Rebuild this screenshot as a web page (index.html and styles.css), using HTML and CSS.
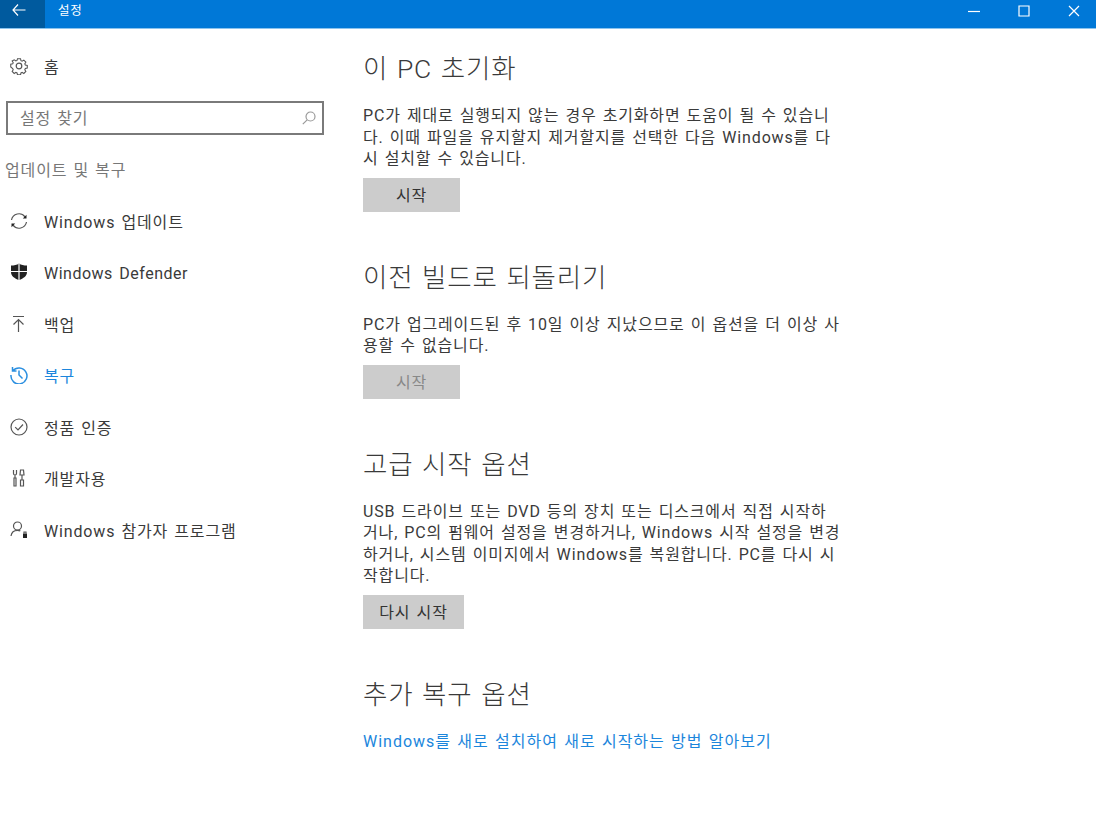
FILE: index.html
```html
<!DOCTYPE html>
<html lang="ko">
<head>
    <meta charset="UTF-8">
    <title>설정</title>
    <link rel="stylesheet" href="styles.css">
</head>
<body>
    <header class="titlebar">
        <div class="back-btn">
            <svg width="14" height="12" viewBox="0 0 14 12"><path d="M6 .5 1 6l5 5.500M1 6H13.500" class="ico-white"/></svg>
        </div>
        <span class="app-title">설정</span>
        <div class="win-btns">
            <svg width="12" height="12" viewBox="0 0 12 12"><path d="M0 6.500H12" class="ico-white"/></svg>
            <svg width="12" height="12" viewBox="0 0 12 12"><path d="M1 1H11V11H1Z" class="ico-white"/></svg>
            <svg width="12" height="12" viewBox="0 0 12 12"><path d="M1 1 11 11M11 1 1 11" class="ico-white"/></svg>
        </div>
    </header>

    <div class="main">
        <nav class="sidebar">
            <a class="nav-item home">
                <svg class="nav-icon" viewBox="0 0 18 18">
                    <path class="ico" d="M7.300 1h3.400l.5 2.200 1.300.6 1.900-1.200 2.300 2.300-1.200 1.900.6 1.300 2.200.5v3l-2.200.5-.6 1.300 1.200 1.900-2.300 2.300-1.900-1.200-1.300.6-.5 2.200H7.300l-.5-2.200-1.300-.6-1.900 1.200-2.300-2.300 1.200-1.900-.6-1.300L-.3 10.300v-3l2.200-.5.6-1.300-1.200-1.900L3.600 2.300l1.900 1.200 1.300-.6Z" transform="translate(1 .8) scale(.89)"/>
                    <circle class="ico" cx="9" cy="9" r="2.800"/>
                </svg>
                <span>홈</span>
            </a>
            <div class="search-box">
                <span class="search-text">설정 찾기</span>
                <svg width="14" height="14" viewBox="0 0 14 14"><circle class="ico-gray" cx="8.500" cy="5.500" r="4.500"/><path class="ico-gray" d="M5.200 8.800.8 13.200"/></svg>
            </div>
            <div class="nav-section">업데이트 및 복구</div>
            <a class="nav-item">
                <svg class="nav-icon" viewBox="0 0 18 18"><path class="ico" d="M1.500 8A7.600 7.600 0 0 1 15 4.800M16.500 10A7.600 7.600 0 0 1 3 13.200"/><path class="fill-dark" d="M12.800 6.500h3.700V2.800ZM5.200 11.500H1.500v3.700Z"/></svg>
                <span>Windows 업데이트</span>
            </a>
            <a class="nav-item tight">
                <svg class="nav-icon" viewBox="0 0 18 18"><path class="fill-dark" d="M9 .5c2 1.400 4.900 2 8 2v6.500c0 4-3.500 6.500-8 8-4.500-1.500-8-4-8-8V2.500C4.100 2.500 7 1.900 9 .5Z"/><path class="ico-white" d="M9 .5v16.500M1 8.500h16"/></svg>
                <span>Windows Defender</span>
            </a>
            <a class="nav-item">
                <svg class="nav-icon" viewBox="0 0 18 18"><path class="ico" d="M3 1.500H14M8.500 17V5M3.500 9.500l5-5 5 5"/></svg>
                <span>백업</span>
            </a>
            <a class="nav-item active">
                <svg class="nav-icon" viewBox="0 0 18 18"><path class="ico-blue" d="M2.800 4.800A8 8 0 1 1 1 9M2.500 1v4h4M9 4.500V9l3.500 3.500"/></svg>
                <span>복구</span>
            </a>
            <a class="nav-item">
                <svg class="nav-icon" viewBox="0 0 18 18"><circle class="ico" cx="9" cy="9" r="8"/><path class="ico" d="M5.200 9.200 8 12l5-5.500"/></svg>
                <span>정품 인증</span>
            </a>
            <a class="nav-item">
                <svg class="nav-icon" viewBox="0 0 18 18"><path class="ico" d="M3.500 1v3.500c0 1 .6 1.500 1.500 1.500s1.500-.5 1.500-1.500V1M5 6v3M4 9h2v8H4ZM10.500 1h3l.5 5h-4ZM12 6v5M10.500 11h3v6h-3Z"/></svg>
                <span>개발자용</span>
            </a>
            <a class="nav-item">
                <svg class="nav-icon" viewBox="0 0 18 18"><circle class="ico" cx="7.500" cy="5" r="4"/><path class="ico" d="M1 15C1.500 11.500 4 9.300 7.500 9.300c1 0 2 .2 2.800.6"/><path class="fill-dark" d="M13 12.500h4V17h-4Z"/><path class="ico" d="M14 12.500V11h2v1.500"/></svg>
                <span>Windows 참가자 프로그램</span>
            </a>
        </nav>

        <main class="content">
            <section class="block">
                <h2>이 PC 초기화</h2>
                <p>PC가 제대로 실행되지 않는 경우 초기화하면 도움이 될 수 있습니<br>다. 이때 파일을 유지할지 제거할지를 선택한 다음 Windows를 다<br>시 설치할 수 있습니다.</p>
                <button class="btn">시작</button>
            </section>
            <section class="block">
                <h2>이전 빌드로 되돌리기</h2>
                <p>PC가 업그레이드된 후 10일 이상 지났으므로 이 옵션을 더 이상 사<br>용할 수 없습니다.</p>
                <button class="btn disabled">시작</button>
            </section>
            <section class="block">
                <h2>고급 시작 옵션</h2>
                <p>USB 드라이브 또는 DVD 등의 장치 또는 디스크에서 직접 시작하<br>거나, PC의 펌웨어 설정을 변경하거나, Windows 시작 설정을 변경<br>하거나, 시스템 이미지에서 Windows를 복원합니다. PC를 다시 시<br>작합니다.</p>
                <button class="btn wide">다시 시작</button>
            </section>
            <section class="block">
                <h2 class="link-head">추가 복구 옵션</h2>
                <a class="link">Windows를 새로 설치하여 새로 시작하는 방법 알아보기</a>
            </section>
        </main>
    </div>
</body>
</html>
```

FILE: styles.css
```css
body {
    margin: 0;
    height: 826px;
    overflow: hidden;
    background: #fff;
    color: #3a3a3a;
    font-family: Roboto, "Noto Sans CJK KR", sans-serif;
    font-size: 16px;
    letter-spacing: 0.85px;
    word-spacing: 1.3px;
}
svg {
    display: block;
    flex: none;
}
.ico, .ico-white, .ico-gray, .ico-blue {
    fill: none;
    stroke-width: 1.2;
}
.ico { stroke: #555; }
.ico-white { stroke: #fff; }
.ico-gray { stroke: #999; }
.ico-blue { stroke: #2b8fe0; stroke-width: 1.5; }
.fill-dark { fill: #222; }

.titlebar {
    display: flex;
    align-items: flex-start;
    height: 28px;
    background: #0078d7;
    border-bottom: 1px solid #8cc4ee;
    color: #fff;
}
.back-btn {
    width: 45px;
    height: 100%;
    padding: 4px 0 0 12px;
    box-sizing: border-box;
    background: #005a9e;
}
.app-title {
    margin-left: 13px;
    font-size: 12.500px;
    line-height: 22px;
}
.win-btns {
    display: flex;
    gap: 38px;
    margin-left: auto;
    margin-right: 16px;
    padding-top: 5px;
}

.main {
    display: flex;
}
.sidebar {
    width: 363px;
    flex: none;
    box-sizing: border-box;
    padding: 12px 0 0 6px;
}
.nav-item {
    display: flex;
    align-items: center;
    gap: 16px;
    height: 51.500px;
    padding-left: 4px;
}
.nav-item.home {
    height: 50px;
}
.nav-item.tight {
    letter-spacing: 0.5px;
    word-spacing: 2px;
}
.nav-item.tight span {
    margin-top: 3px;
}
.nav-icon {
    width: 18px;
    height: 18px;
}
.nav-item.active {
    color: #1c86dc;
}
.search-box {
    display: flex;
    align-items: center;
    justify-content: space-between;
    box-sizing: border-box;
    width: 318px;
    height: 34px;
    margin-top: 10px;
    padding: 0 6px 0 12px;
    border: 2px solid #7a7a7a;
    color: #777;
}
.search-text {
    margin-top: -2px;
}
.nav-section {
    height: 40px;
    margin: 16px 0 4px -1px;
    line-height: 40px;
    color: #777;
}

.content {
    padding-top: 20px;
}
.block {
    margin-bottom: 45.500px;
}
h2 {
    margin: 0 0 16px;
    font-size: 26.500px;
    font-weight: 300;
    letter-spacing: 0.8px;
    word-spacing: 1.500px;
    line-height: 40px;
}
.link-head {
    margin-bottom: 13px;
}
p {
    margin: 0 0 8.500px;
    line-height: 21.500px;
    white-space: nowrap;
}
.btn {
    display: block;
    width: 97px;
    height: 34px;
    padding: 0 0 2px;
    border: 0;
    background: #ccc;
    color: #333;
    font: inherit;
    letter-spacing: inherit;
    word-spacing: inherit;
}
.btn.disabled {
    color: #888;
}
.btn.wide {
    width: 101px;
}
.link {
    color: #1c86dc;
    letter-spacing: 1px;
}
```
